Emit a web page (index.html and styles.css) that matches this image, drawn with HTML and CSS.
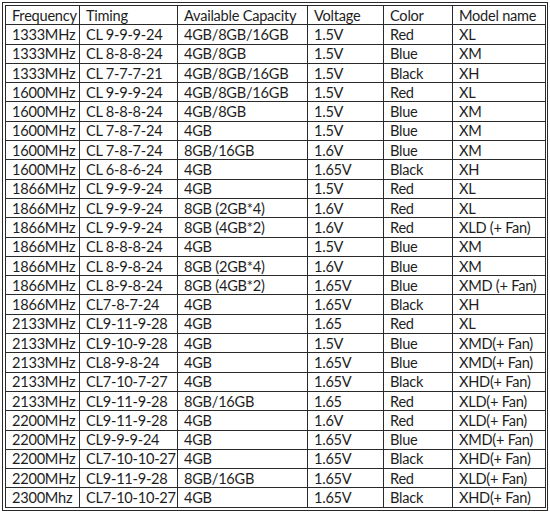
FILE: index.html
```html
<!DOCTYPE html>
<html>
<head>
<meta charset="utf-8">
<link rel="stylesheet" href="styles.css">
</head>
<body>
<div class="frame">
<table class="spec">
<colgroup>
<col class="c1"><col class="c2"><col class="c3"><col class="c4"><col class="c5"><col class="c6">
</colgroup>
<tbody>
<tr><td>Frequency</td><td>Timing</td><td>Available Capacity</td><td>Voltage</td><td>Color</td><td>Model name</td></tr>
<tr><td>1333MHz</td><td>CL 9-9-9-24</td><td>4GB/8GB/16GB</td><td>1.5V</td><td>Red</td><td>XL</td></tr>
<tr><td>1333MHz</td><td>CL 8-8-8-24</td><td>4GB/8GB</td><td>1.5V</td><td>Blue</td><td>XM</td></tr>
<tr><td>1333MHz</td><td>CL 7-7-7-21</td><td>4GB/8GB/16GB</td><td>1.5V</td><td>Black</td><td>XH</td></tr>
<tr><td>1600MHz</td><td>CL 9-9-9-24</td><td>4GB/8GB/16GB</td><td>1.5V</td><td>Red</td><td>XL</td></tr>
<tr><td>1600MHz</td><td>CL 8-8-8-24</td><td>4GB/8GB</td><td>1.5V</td><td>Blue</td><td>XM</td></tr>
<tr><td>1600MHz</td><td>CL 7-8-7-24</td><td>4GB</td><td>1.5V</td><td>Blue</td><td>XM</td></tr>
<tr><td>1600MHz</td><td>CL 7-8-7-24</td><td>8GB/16GB</td><td>1.6V</td><td>Blue</td><td>XM</td></tr>
<tr><td>1600MHz</td><td>CL 6-8-6-24</td><td>4GB</td><td>1.65V</td><td>Black</td><td>XH</td></tr>
<tr><td>1866MHz</td><td>CL 9-9-9-24</td><td>4GB</td><td>1.5V</td><td>Red</td><td>XL</td></tr>
<tr><td>1866MHz</td><td>CL 9-9-9-24</td><td>8GB (2GB*4)</td><td>1.6V</td><td>Red</td><td>XL</td></tr>
<tr><td>1866MHz</td><td>CL 9-9-9-24</td><td>8GB (4GB*2)</td><td>1.6V</td><td>Red</td><td>XLD (+ Fan)</td></tr>
<tr><td>1866MHz</td><td>CL 8-8-8-24</td><td>4GB</td><td>1.5V</td><td>Blue</td><td>XM</td></tr>
<tr><td>1866MHz</td><td>CL 8-9-8-24</td><td>8GB (2GB*4)</td><td>1.6V</td><td>Blue</td><td>XM</td></tr>
<tr><td>1866MHz</td><td>CL 8-9-8-24</td><td>8GB (4GB*2)</td><td>1.65V</td><td>Blue</td><td>XMD (+ Fan)</td></tr>
<tr><td>1866MHz</td><td>CL7-8-7-24</td><td>4GB</td><td>1.65V</td><td>Black</td><td>XH</td></tr>
<tr><td>2133MHz</td><td>CL9-11-9-28</td><td>4GB</td><td>1.65</td><td>Red</td><td>XL</td></tr>
<tr><td>2133MHz</td><td>CL9-10-9-28</td><td>4GB</td><td>1.5V</td><td>Blue</td><td>XMD(+ Fan)</td></tr>
<tr><td>2133MHz</td><td>CL8-9-8-24</td><td>4GB</td><td>1.65V</td><td>Blue</td><td>XMD(+ Fan)</td></tr>
<tr><td>2133MHz</td><td>CL7-10-7-27</td><td>4GB</td><td>1.65V</td><td>Black</td><td>XHD(+ Fan)</td></tr>
<tr><td>2133MHz</td><td>CL9-11-9-28</td><td>8GB/16GB</td><td>1.65</td><td>Red</td><td>XLD(+ Fan)</td></tr>
<tr><td>2200MHz</td><td>CL9-11-9-28</td><td>4GB</td><td>1.6V</td><td>Red</td><td>XLD(+ Fan)</td></tr>
<tr><td>2200MHz</td><td>CL9-9-9-24</td><td>4GB</td><td>1.65V</td><td>Blue</td><td>XMD(+ Fan)</td></tr>
<tr><td>2200MHz</td><td>CL7-10-10-27</td><td>4GB</td><td>1.65V</td><td>Black</td><td>XHD(+ Fan)</td></tr>
<tr><td>2200MHz</td><td>CL9-11-9-28</td><td>8GB/16GB</td><td>1.65V</td><td>Red</td><td>XLD(+ Fan)</td></tr>
<tr><td>2300Mhz</td><td>CL7-10-10-27</td><td>4GB</td><td>1.65V</td><td>Black</td><td>XHD(+ Fan)</td></tr>
</tbody>
</table>
</div>
</body>
</html>
```
FILE: styles.css
```css
html, body {
  margin: 0;
  padding: 0;
  background: #ffffff;
}
.frame {
  margin: 2px 0 0 2px;
  width: 540px;
  padding: 2px;
  border: 1px solid #2a2a2a;
}
.spec {
  border-collapse: collapse;
  table-layout: fixed;
  width: 540px;
  font-family: Lato, "Open Sans", sans-serif;
  font-size: 14.6px;
  letter-spacing: -0.25px;
  color: #1e1e1e;
}
.spec tr {
  height: 19.3px;
}
.spec td {
  border: 1px solid #2a2a2a;
  padding: 0 0 0 6px;
  line-height: 17px;
  white-space: nowrap;
  overflow: hidden;
  vertical-align: middle;
}
.c1 { width: 74px; }
.c2 { width: 98px; }
.c3 { width: 130px; }
.c4 { width: 76px; }
.c5 { width: 69px; }
.c6 { width: 93px; }
```
